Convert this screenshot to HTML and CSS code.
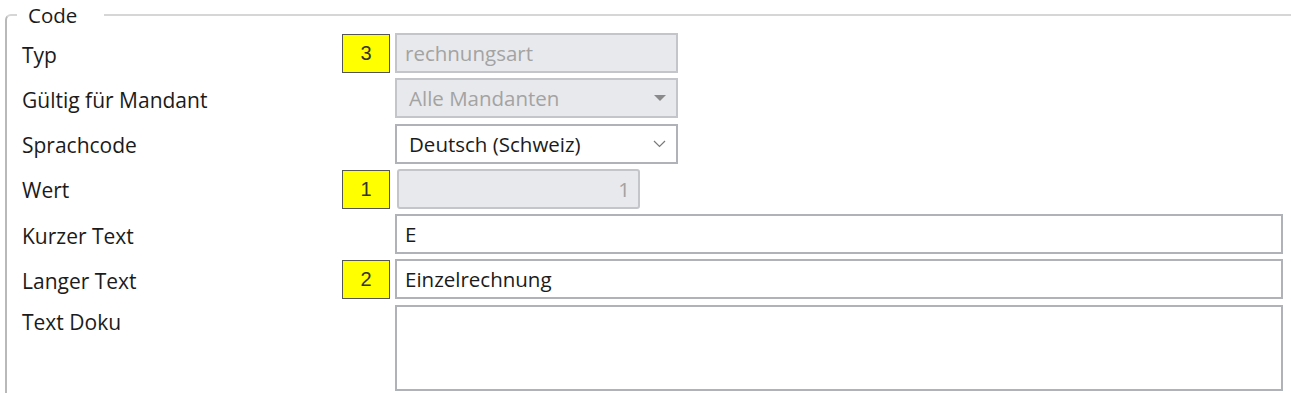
FILE: index.html
```html
<!DOCTYPE html>
<html lang="de">
<head>
    <meta charset="UTF-8">
    <title>Code</title>
    <link rel="stylesheet" href="styles.css">
</head>
<body>
    <fieldset class="group">
        <legend>Code</legend>
        <div class="form">
            <div class="label">Typ</div>
            <div class="badge">3</div>
            <div class="field half disabled">rechnungsart</div>

            <div class="label">Gültig für Mandant</div>
            <div></div>
            <div class="field half disabled combo">
                <span>Alle Mandanten</span>
                <svg class="arrow" width="12" height="7" viewBox="0 0 12 7"><path d="M0 0 H12 L6 6 Z" fill="#8a8a8a"/></svg>
            </div>

            <div class="label">Sprachcode</div>
            <div></div>
            <div class="field half combo">
                <span>Deutsch (Schweiz)</span>
                <svg class="arrow" width="13" height="8" viewBox="0 0 13 8"><path d="M1 1 L6.5 6.5 L12 1" fill="none" stroke="#7a7a7a" stroke-width="1.2"/></svg>
            </div>

            <div class="label">Wert</div>
            <div class="badge">1</div>
            <div class="field number disabled">1</div>

            <div class="label">Kurzer Text</div>
            <div></div>
            <div class="field">E</div>

            <div class="label">Langer Text</div>
            <div class="badge">2</div>
            <div class="field">Einzelrechnung</div>

            <div class="label top">Text Doku</div>
            <div></div>
            <div class="field memo"></div>
        </div>
    </fieldset>
</body>
</html>
```

FILE: styles.css
```css
body {
    margin: 0;
    font-family: "Open Sans", "Noto Sans", sans-serif;
    font-size: 21px;
    color: #1b1b1b;
    background: #fff;
    overflow: hidden;
}

.group {
    box-sizing: border-box;
    margin: 5px 0 0 5px;
    padding: 8px 0 0 10px;
    border: none;
    border-top: 2px solid #d6d6d6;
    border-left: 2px solid #b9b9b9;
    border-top-left-radius: 6px;
    height: 388px;
}

.group legend {
    padding: 0 27px 0 11px;
    line-height: 20px;
    font-size: 20.5px;
}

.form {
    display: grid;
    grid-template-columns: 315px 48px 1fr;
    grid-auto-rows: 40px;
    row-gap: 5.3px;
    column-gap: 5px;
    margin-left: 5px;
    width: 1261px;
}

.label {
    display: flex;
    align-items: center;
    padding-top: 3px;
    white-space: nowrap;
}

.label.top {
    align-items: flex-start;
    padding-top: 3px;
}

.badge {
    display: flex;
    align-items: center;
    justify-content: center;
    background: #ffff00;
    border: 1px solid #555;
    font-family: "Liberation Sans", Arial, sans-serif;
    font-size: 20px;
    color: #333;
    margin-top: 1px;
}

.field {
    display: flex;
    align-items: center;
    padding: 0 8px;
    border: 2px solid #b0b2b9;
    background: #fff;
    font-size: 20.5px;
}

.field.half {
    width: 283px;
    box-sizing: border-box;
}

.field.disabled {
    background: #e8e9ec;
    color: #a3a3a3;
    border-color: #c3c5cb;
}

.combo {
    justify-content: space-between;
    padding-left: 12px;
    padding-right: 10px;
}

.number {
    width: 243px;
    box-sizing: border-box;
    margin-left: 2px;
    justify-content: flex-end;
    border-radius: 3px;
    border-color: #a9abb2;
}

.memo {
    grid-row: span 2;
    height: 82px;
}
```
